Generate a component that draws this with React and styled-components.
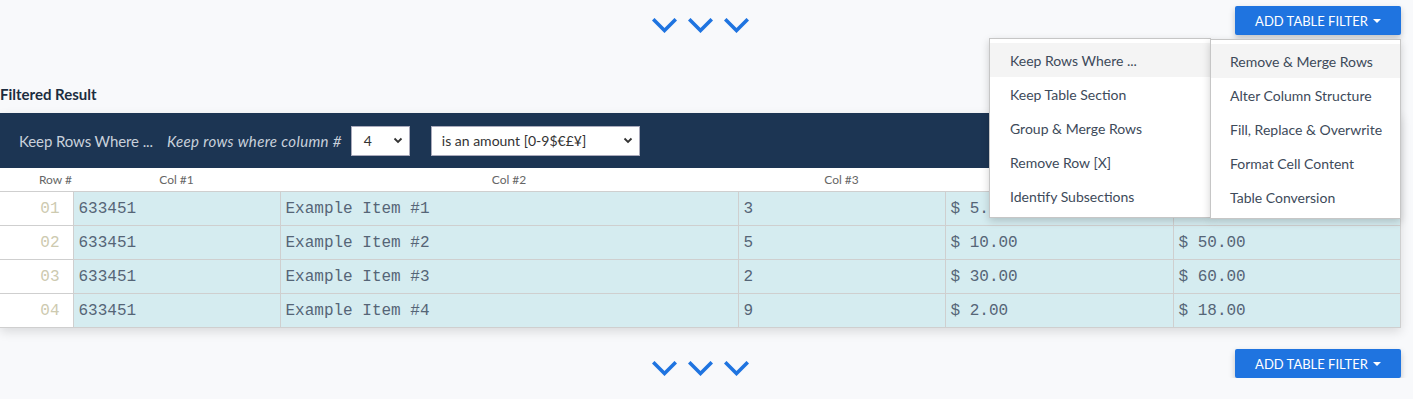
import React from 'react'
import styled, { createGlobalStyle } from 'styled-components'

const GlobalStyle = createGlobalStyle`
  html, body {
    margin: 0;
    padding: 0;
    background: #f8f9fb;
    font-family: Lato, "Open Sans", sans-serif;
    overflow: hidden;
  }
`

const Page = styled.div`
  width: 1401px;
  position: relative;
`

const ActionRow = styled.div`
  position: relative;
  display: grid;
  grid-template-columns: 1fr auto 1fr;
  align-items: start;
  padding-top: ${props => props.top}px;
`

const Chevrons = styled.div`
  grid-column: 2;
  display: flex;
  gap: 11px;
  margin-top: 12px;
`

const AddButton = styled.button`
  grid-column: 3;
  justify-self: end;
  width: 166px;
  height: 29px;
  border: none;
  border-radius: 2px;
  background: #1f74e0;
  color: #fff;
  font-family: Lato, sans-serif;
  font-size: 13px;
  text-transform: uppercase;
  display: flex;
  align-items: center;
  justify-content: center;
  gap: 5px;
  box-shadow: 0 3px 6px rgba(0, 0, 0, 0.22);
  padding: 0;
`

const Caret = styled.span`
  width: 0;
  height: 0;
  border-left: 4px solid transparent;
  border-right: 4px solid transparent;
  border-top: 4px solid #fff;
`

const Heading = styled.h2`
  margin: 49px 0 9px;
  font-size: 15px;
  line-height: 20px;
  font-weight: 700;
  color: #1c2d40;
`

const Card = styled.div`
  box-shadow: 0 4px 10px rgba(0, 0, 0, 0.12);
  background: #fff;
`

const FilterBar = styled.div`
  height: 55px;
  background: #1c3553;
  display: flex;
  align-items: center;
  padding-left: 19px;
  color: #c9d1db;
  font-size: 15px;
`

const BarTitle = styled.span`
  margin-right: 14px;
  letter-spacing: -0.1px;
`

const BarHint = styled.span`
  font-style: italic;
  letter-spacing: 0.35px;
  margin-right: 9px;
`

const SelectBox = styled.div`
  width: ${props => props.width}px;
  height: 30px;
  box-sizing: border-box;
  background: #fff;
  border: 1px solid #aab;
  display: flex;
  align-items: center;
  justify-content: space-between;
  padding: 0 6px 0 ${props => props.pad}px;
  margin-right: 21px;
  color: #333;
  font-size: 14px;
`

const Table = styled.table`
  border-collapse: collapse;
  width: 1400px;
  table-layout: fixed;
`

const HeadCell = styled.th`
  height: 23px;
  padding: 0;
  font-weight: 400;
  font-size: 12px;
  color: #666;
  text-align: ${props => (props.right ? 'right' : 'center')};
  padding-right: ${props => (props.right ? 1 : 0)}px;
  background: #fff;
  border-bottom: 1px solid #cfcfcf;
`

const RowNum = styled.td`
  height: 33px;
  padding: 0 13px 0 0;
  text-align: right;
  font-family: "Liberation Mono", monospace;
  font-size: 16px;
  color: #cdcab0;
  background: #fff;
  border-bottom: 1px solid #cfcfcf;
`

const Cell = styled.td`
  padding: 0 5px;
  font-family: "Liberation Mono", monospace;
  font-size: 16px;
  color: #556577;
  background: #d5ecf0;
  border: 1px solid #cfcfcf;
  border-top: none;
  white-space: nowrap;
`

const MenuWrap = styled.div`
  position: absolute;
  top: 38px;
  right: 0;
  display: flex;
  align-items: flex-start;
  z-index: 10;
`

const Menu = styled.ul`
  list-style: none;
  margin: ${props => (props.main ? '1px 0 0 -1px' : '0')};
  padding: 4px 0;
  width: ${props => props.width}px;
  box-sizing: border-box;
  background: #fff;
  border: 1px solid #c6c6c6;
  box-shadow: 0 3px 8px rgba(0, 0, 0, 0.18);
  position: relative;
  z-index: ${props => (props.main ? 2 : 1)};
`

const MenuItem = styled.li`
  height: 34px;
  display: flex;
  align-items: center;
  padding-left: ${props => props.pad}px;
  font-size: 14px;
  color: #3d4a5a;
  background: ${props => (props.active ? '#f4f4f4' : 'transparent')};
  white-space: nowrap;
`

const Chevron = () => (
  <svg width="25" height="15" viewBox="0 0 25 15">
    <polyline
      points="2.5,2.5 12.5,12.5 22.5,2.5"
      fill="none"
      stroke="#1f74e0"
      strokeWidth="3.6"
      strokeLinecap="square"
    />
  </svg>
)

const SmallChevron = () => (
  <svg width="10" height="7" viewBox="0 0 10 7">
    <polyline points="1.5,1.5 5,5 8.5,1.5" fill="none" stroke="#333" strokeWidth="1.8" />
  </svg>
)

const columns = [
  { label: 'Row #', width: 73 },
  { label: 'Col #1', width: 207 },
  { label: 'Col #2', width: 458 },
  { label: 'Col #3', width: 207 },
  { label: 'Col #4', width: 228 },
  { label: 'Col #5', width: 227 },
]

const rows = [
  ['01', '633451', 'Example Item #1', '3', '$ 5.00', '$ 15.00'],
  ['02', '633451', 'Example Item #2', '5', '$ 10.00', '$ 50.00'],
  ['03', '633451', 'Example Item #3', '2', '$ 30.00', '$ 60.00'],
  ['04', '633451', 'Example Item #4', '9', '$ 2.00', '$ 18.00'],
]

const subItems = [
  'Keep Rows Where ...',
  'Keep Table Section',
  'Group & Merge Rows',
  'Remove Row [X]',
  'Identify Subsections',
]

const mainItems = [
  'Remove & Merge Rows',
  'Alter Column Structure',
  'Fill, Replace & Overwrite',
  'Format Cell Content',
  'Table Conversion',
]

const ChevronRow = () => (
  <Chevrons>
    <Chevron />
    <Chevron />
    <Chevron />
  </Chevrons>
)

export default function App() {
  return (
    <Page>
      <GlobalStyle />
      <ActionRow top={6}>
        <ChevronRow />
        <AddButton>
          Add Table Filter <Caret />
        </AddButton>
        <MenuWrap>
          <Menu width={222}>
            {subItems.map((item, i) => (
              <MenuItem key={item} pad={20} active={i === 0}>
                {item}
              </MenuItem>
            ))}
          </Menu>
          <Menu main width={191}>
            {mainItems.map((item, i) => (
              <MenuItem key={item} pad={19} active={i === 0}>
                {item}
              </MenuItem>
            ))}
          </Menu>
        </MenuWrap>
      </ActionRow>

      <Heading>Filtered Result</Heading>

      <Card>
        <FilterBar>
          <BarTitle>Keep Rows Where ...</BarTitle>
          <BarHint>Keep rows where column #</BarHint>
          <SelectBox width={59} pad={12}>
            4 <SmallChevron />
          </SelectBox>
          <SelectBox width={209} pad={10}>
            is an amount [0-9$€£¥] <SmallChevron />
          </SelectBox>
        </FilterBar>
        <Table>
          <colgroup>
            {columns.map(c => (
              <col key={c.label} style={{ width: c.width }} />
            ))}
          </colgroup>
          <thead>
            <tr>
              {columns.map((c, i) => (
                <HeadCell key={c.label} right={i === 0}>
                  {c.label}
                </HeadCell>
              ))}
            </tr>
          </thead>
          <tbody>
            {rows.map(r => (
              <tr key={r[0]}>
                <RowNum>{r[0]}</RowNum>
                {r.slice(1).map((v, i) => (
                  <Cell key={i}>{v}</Cell>
                ))}
              </tr>
            ))}
          </tbody>
        </Table>
      </Card>

      <ActionRow top={21}>
        <ChevronRow />
        <AddButton>
          Add Table Filter <Caret />
        </AddButton>
      </ActionRow>
    </Page>
  )
}
